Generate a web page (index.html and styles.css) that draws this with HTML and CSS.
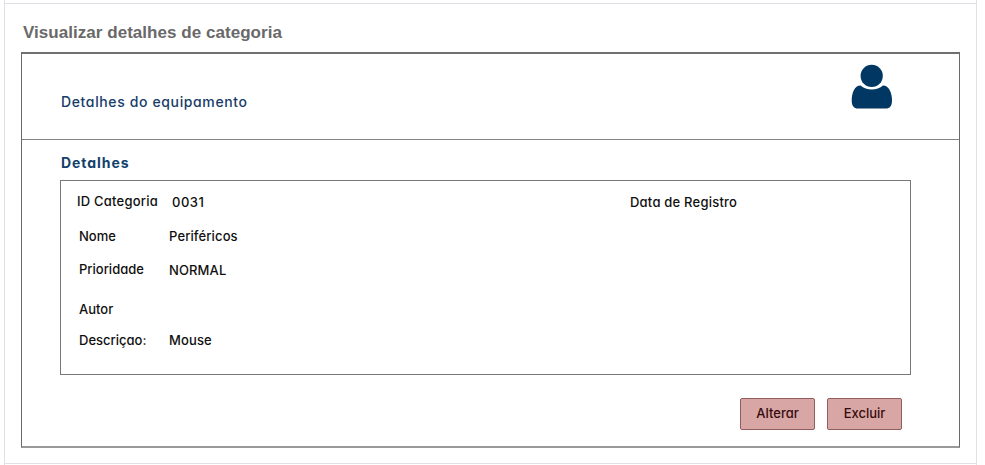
FILE: index.html
```html
<!DOCTYPE html>
<html lang="pt-BR">
<head>
<meta charset="utf-8">
<title>Visualizar detalhes de categoria</title>
<link rel="stylesheet" href="styles.css">
</head>
<body>
<main class="sheet">
  <div class="cell">
    <h1 class="title">Visualizar detalhes de categoria</h1>
    <section class="window">
      <header class="window-header">
        <h2 class="heading">Detalhes do equipamento</h2>
        <svg class="user" viewBox="0 0 42 46" aria-hidden="true">
          <path d="M9.5 21.5C12.5 24 16.500 25.500 20.800 25.500S29 24 32 21.500C38 21.500 41 29 41 36.500C41 42 39 44.500 34.500 44.500H7C3 44.500 .7 42 .7 36.500C.7 29 3.500 21.500 9.500 21.500Z"/>
          <circle cx="20.700" cy="11.900" r="11.100"/>
        </svg>
      </header>
      <div class="window-body">
        <h3 class="subheading">Detalhes</h3>
        <div class="details">
          <div class="row row-id">
            <span class="label label-id">ID Categoria</span>
            <span class="value value-id">0031</span>
            <span class="date">Data de Registro</span>
          </div>
          <div class="row row-name"><span class="label">Nome</span><span class="value">Periféricos</span></div>
          <div class="row row-priority"><span class="label">Prioridade</span><span class="value">NORMAL</span></div>
          <div class="row row-author"><span class="label">Autor</span></div>
          <div class="row"><span class="label">Descriçao:</span><span class="value">Mouse</span></div>
        </div>
        <div class="actions">
          <button class="button" type="button">Alterar</button>
          <button class="button" type="button">Excluir</button>
        </div>
      </div>
    </section>
  </div>
</main>
</body>
</html>
```
FILE: styles.css
```css
* { box-sizing: border-box; }
body { margin: 0; background: #fff; font-family: Inter, "Liberation Sans", sans-serif; font-feature-settings: "cv11"; color: #101010; }
h1, h2, h3 { margin: 0; }
.sheet { width: 973px; height: 465px; margin-left: 4px; padding-top: 3px; border: solid #dfe1e6; border-width: 0 1px; }
.cell { height: 461px; padding: 16px 16px 0; border: solid #dfe1e6; border-width: 1px 0; }
.title { height: 32px; padding-left: 2px; font: bold 17px/26px "Liberation Sans", Arial, sans-serif; letter-spacing: 0.04px; color: #696969; }
.window { width: 939px; height: 396px; border: 1px solid #696969; border-top: 2px solid #707070; border-bottom: 2px solid #999; }
.window-header { display: flex; justify-content: space-between; height: 86px; padding: 10px 66px 0 39px; border-bottom: 1px solid #858585; }
.heading { padding-top: 28px; font-size: 14px; line-height: 20px; font-weight: 500; letter-spacing: 0.63px; color: #173c68; }
.user { width: 42px; height: 46px; fill: #003763; }
.window-body { padding: 12px 48px 0 38px; }
.subheading { height: 28px; padding: 1px 0 0 1px; font-size: 14px; line-height: 20px; font-weight: 700; letter-spacing: 0.95px; color: #12416c; }
.details { display: flex; flex-direction: column; width: 851px; height: 195px; padding: 10px 16px 0; border: 1px solid #777; font-size: 13px; line-height: 20px; font-weight: 450; }
.row { display: flex; flex-shrink: 0; padding-left: 2px; white-space: nowrap; }
.row-id { height: 35px; padding-left: 0; letter-spacing: 0.22px; }
.row-name { height: 33px; }
.row-priority { height: 40px; }
.row-author { height: 31px; }
.label { width: 90px; }
.label-id { width: 95px; }
.value { letter-spacing: 0.12px; }
.value-id { width: 458px; padding-top: 1px; letter-spacing: 0.5px; }
.date { padding-top: 1px; }
.row-priority .value { padding-top: 1px; }
.actions { display: flex; justify-content: flex-end; gap: 12px; margin-top: 23px; padding-right: 9px; }
.button { width: 75px; height: 32px; padding: 0 0 2px; border: 1px solid #925d5d; border-radius: 2px; background: #d9a6a6; color: #350c0c; font: 500 13px/20px Inter, sans-serif; font-feature-settings: "cv11"; }
```
